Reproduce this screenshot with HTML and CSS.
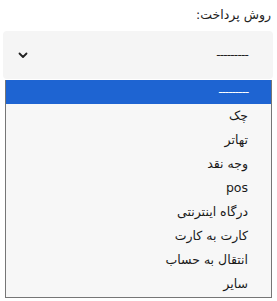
FILE: index.html
```html
<!DOCTYPE html>
<html lang="fa" dir="rtl">

<head>
  <meta charset="UTF-8">
  <meta name="viewport" content="width=device-width, initial-scale=1.0">
  <title>روش پرداخت</title>
  <link rel="stylesheet" href="styles.css">
</head>

<body>
  <div class="field">
    <label class="field-label">روش پرداخت:</label>
    <div class="select-box">
      <span class="select-value">---------</span>
      <svg class="chevron" width="10" height="7" viewBox="0 0 10 7">
        <path d="M1.5 1.5 L5 5 L8.5 1.5" fill="none" stroke="#222" stroke-width="1.8" stroke-linecap="round" stroke-linejoin="round"/>
      </svg>
    </div>

    <!-- لیست باز شده -->
    <ul class="options">
      <li class="selected"><span class="dashes">---------</span></li>
      <li>چک</li>
      <li>تهاتر</li>
      <li>وجه نقد</li>
      <li>pos</li>
      <li>درگاه اینترنتی</li>
      <li>کارت به کارت</li>
      <li>انتقال به حساب</li>
      <li>سایر</li>
    </ul>
  </div>
</body>

</html>
```

FILE: styles.css
```css
body {
  margin: 0;
  font-family: "DejaVu Sans", "Noto Sans", sans-serif;
  background: #fff;
  color: #222;
}

.field {
  padding: 6px 4px 0 3px;
}

.field-label {
  display: block;
  font-size: 12.5px;
  line-height: 18px;
  padding-right: 2px;
  margin-bottom: 7px;
}

.select-box {
  display: flex;
  align-items: center;
  justify-content: space-between;
  height: 48px;
  padding: 0 25px 0 15px;
  background-color: #f5f5f5;
  border-radius: 4px;
}

.select-value {
  font-size: 12px;
  letter-spacing: -0.8px;
}

.options {
  margin: 1px 1px 0 2px;
  padding: 0 0 1px;
  list-style: none;
  background-color: #f7f7f7;
  border: 1px solid #767676;
  border-top: none;
}

.options li {
  height: 24px;
  line-height: 24px;
  padding-right: 23px;
  font-size: 12.5px;
  color: #1a1a1a;
}

.options li.selected {
  background-color: #1e64d2;
  color: #fff;
}

.dashes {
  letter-spacing: -1.2px;
}
```
